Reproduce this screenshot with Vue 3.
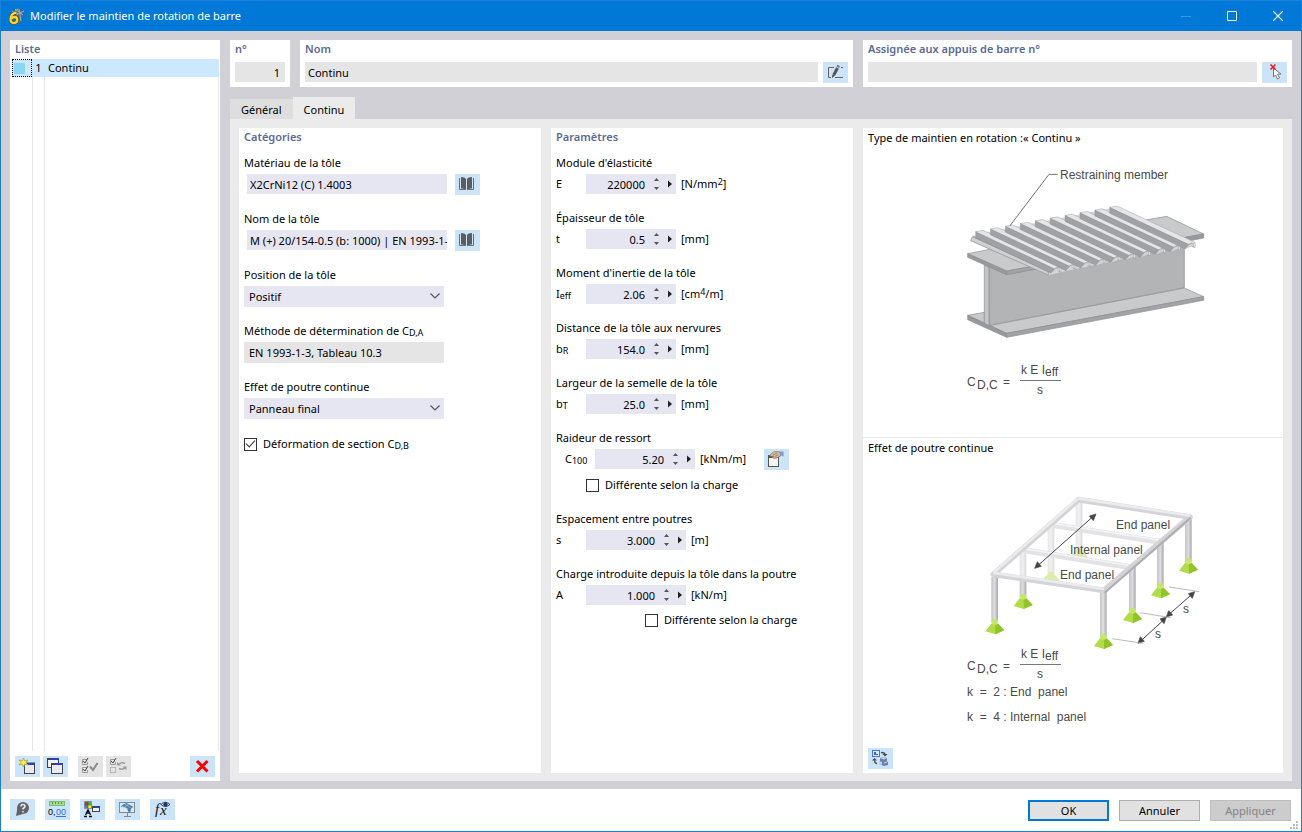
<script setup>
import { ref } from 'vue'

const params = ref([
  { id: 'e', label: 'Module d\'élasticité', sym: 'E', value: '220000', unit: '[N/mm', sup: '2', end: ']' },
  { id: 't', label: 'Épaisseur de tôle', sym: 't', value: '0.5', unit: '[mm]' },
  { id: 'ieff', label: 'Moment d\'inertie de la tôle', sym: 'I', sub: 'eff', value: '2.06', unit: '[cm', sup: '4', end: '/m]' },
  { id: 'br', label: 'Distance de la tôle aux nervures', sym: 'b', sub: 'R', value: '154.0', unit: '[mm]' },
  { id: 'bt', label: 'Largeur de la semelle de la tôle', sym: 'b', sub: 'T', value: '25.0', unit: '[mm]' },
  { id: 'c100', label: 'Raideur de ressort', sym: 'C', sub: '100', value: '5.20', unit: '[kNm/m]', wide: true, indent: true, tool: true, check: 'near' },
  { id: 's', label: 'Espacement entre poutres', sym: 's', value: '3.000', unit: '[m]', wide: true },
  { id: 'a', label: 'Charge introduite depuis la tôle dans la poutre', sym: 'A', value: '1.000', unit: '[kN/m]', wide: true, check: 'far' },
])
const name = ref('Continu')
const material = ref('X2CrNi12 (C) 1.4003')
const sheet = ref('M (+) 20/154-0.5 (b: 1000) | EN 1993-1-3')
const deform = ref(true)

const ribs = Array.from({ length: 10 }, (_, i) => ({ x: 107 + i * 44.7, y: 215 - i * 8.1 }))
const backPosts = [
  { x: 417, y: 62, h: 148 },
  { x: 333, y: 138, h: 142 },
]
const posts = [
  { x: 249, y: 214, h: 134 },
  { x: 745, y: 112, h: 130 },
  { x: 661, y: 182, h: 134 },
  { x: 577, y: 258, h: 132 },
  { x: 164, y: 288, h: 136 },
  { x: 490, y: 334, h: 134 },
]
</script>

<template>
  <div class="window">
    <header class="titlebar">
      <svg class="app-icon" width="18" height="18" viewBox="0 0 18 18">
        <path d="M3 6 L10 1 L16 4 L16 6 L12 17 L9 15 L8 6Z" fill="#4d6b86" />
        <path d="M4 4 L10 7 M7 2 L15 8 M3 7 L10 2 M8 8 L16 4 M11 2 L13 14" stroke="#9fb3c4" stroke-width="1" fill="none" />
        <path d="M8.500 5.500 C4.500 6 2.500 9 2.500 12 C2.500 15 4 16 6 16 C8.200 16 9.200 14.500 9.200 12.800 C9.200 11 8 10 6.500 10 C5.300 10 4.200 10.600 3.500 12" fill="none" stroke="#5a4a10" stroke-width="3.400" />
        <path d="M8.500 5.500 C4.500 6 2.500 9 2.500 12 C2.500 15 4 16 6 16 C8.200 16 9.200 14.500 9.200 12.800 C9.200 11 8 10 6.500 10 C5.300 10 4.200 10.600 3.500 12" fill="none" stroke="#ffd42e" stroke-width="2.300" />
      </svg>
      <h1>Modifier le maintien de rotation de barre</h1>
      <div class="win-controls">
        <button type="button" aria-label="Réduire" disabled><svg width="10" height="10"><path d="M0 5.500H10" stroke="#3f9ae4" /></svg></button>
        <button type="button" aria-label="Agrandir"><svg width="10" height="10"><path d="M.5 .5H9.500V9.500H.5Z" fill="none" stroke="#fff" /></svg></button>
        <button type="button" aria-label="Fermer"><svg width="10" height="10"><path d="M0 0L10 10M10 0L0 10" stroke="#fff" stroke-width="1.200" /></svg></button>
      </div>
    </header>

    <main class="body">
      <aside class="card list">
        <h2>Liste</h2>
        <div class="list-body">
          <table>
            <tbody>
              <tr>
                <td class="swatch"><span></span></td>
                <td class="num">1</td>
                <td class="name">Continu</td>
              </tr>
            </tbody>
          </table>
        </div>
        <div class="list-tools">
          <button class="tool" type="button" aria-label="Nouveau">
            <svg width="25" height="21" viewBox="0 0 25 21">
              <rect x="9.500" y="7.500" width="10" height="10" fill="#e9eaed" stroke="#444" />
              <path d="M9 7.500h11" stroke="#444" stroke-width="2" /><path d="M13 8h6" stroke="#2440d8" stroke-width="2" />
              <path d="M8.500 2l1.200 2.800 3.300-.8-2 2.500 2 2.500-3.300-.8L8.500 11 7.300 8.200 4 9l2-2.500L4 4l3.300 .8z" fill="#fff04a" stroke="#a5a63c" stroke-width=".8" />
            </svg>
          </button>
          <button class="tool" type="button" aria-label="Copier">
            <svg width="25" height="21" viewBox="0 0 25 21">
              <rect x="4.500" y="2.500" width="11" height="9" fill="#f1f1f4" stroke="#444" />
              <path d="M4 3h12" stroke="#444" stroke-width="2" /><path d="M9 3h6" stroke="#2440d8" stroke-width="2" />
              <rect x="8.500" y="7.500" width="11" height="10" fill="#e9eaed" stroke="#444" />
              <path d="M8 8h12" stroke="#444" stroke-width="2" /><path d="M13 8h6" stroke="#2440d8" stroke-width="2" />
            </svg>
          </button>
          <button class="tool off gap" type="button" aria-label="Tout cocher" disabled>
            <svg width="25" height="21" viewBox="0 0 25 21" fill="none">
              <path d="M9 3.500H4.500V8.500H9.500V6M9 11.500H4.500V16.500H9.500V14" stroke="#999" />
              <path d="M5 5l2 2 3-5M5 13l2 2 3-5" stroke="#444" />
              <path d="M12 10.500l3 3.500 4.500-7" stroke="#8b8b8b" stroke-width="2" />
            </svg>
          </button>
          <button class="tool off" type="button" aria-label="Inverser" disabled>
            <svg width="25" height="21" viewBox="0 0 25 21" fill="none">
              <path d="M9 3.500H4.500V8.500H9.500V6" stroke="#999" /><path d="M5 5l2 2 3-5" stroke="#444" />
              <rect x="4.500" y="11.500" width="5" height="5" stroke="#b5b5b5" />
              <path d="M13 8.500c1-2 4-2 6-1M19 11.500c-1 2-4 2-6 1" stroke="#999" stroke-width="1.500" />
              <path d="M11 6v3.500h4zM20.500 14v-3.500h-4z" fill="#999" />
            </svg>
          </button>
          <button class="tool last" type="button" aria-label="Supprimer">
            <svg width="25" height="21" viewBox="0 0 25 21"><path d="M7 5l10.500 10.500M17.500 5L7 15.500" stroke="#f00" stroke-width="3" /></svg>
          </button>
        </div>
      </aside>

      <section class="content">
        <div class="heads">
          <div class="card head">
            <label for="no">n°</label>
            <input id="no" class="ro right" value="1" readonly />
          </div>
          <div class="card head">
            <label for="nom">Nom</label>
            <div class="line">
              <input id="nom" v-model="name" class="ro" />
              <button class="tool" type="button" aria-label="Modifier le nom">
                <svg width="25" height="21" viewBox="0 0 25 21" fill="none">
                  <path d="M11 5.500H5.500V15.500H8M12 15.500h8M18 5.500h2" stroke="#666" />
                  <path d="M10.800 13L14.500 6" stroke="#555" stroke-width="3" /><path d="M14.800 5.200L15.700 3.500" stroke="#777" stroke-width="3" /><path d="M9 16l.4-3.500 2.400 1.300z" fill="#444" />
                </svg>
              </button>
            </div>
          </div>
          <div class="card head">
            <label for="assign">Assignée aux appuis de barre n°</label>
            <div class="line">
              <input id="assign" class="ro" readonly />
              <button class="tool" type="button" aria-label="Sélectionner">
                <svg width="25" height="21" viewBox="0 0 25 21">
                  <path d="M11.500 6v9l2-2 2 4 2-1-2-4h3.500z" fill="#fff" stroke="#777" />
                  <path d="M8.500 2.500l5 5M13.500 2.500l-5 5" stroke="#e81818" stroke-width="1.500" />
                </svg>
              </button>
            </div>
          </div>
        </div>

        <nav class="tabs" role="tablist">
          <button type="button" role="tab" aria-selected="false">Général</button>
          <button type="button" role="tab" aria-selected="true" class="active">Continu</button>
        </nav>

        <div class="page">
          <section class="card panel">
            <h2>Catégories</h2>
            <div class="group">
              <label for="mat">Matériau de la tôle</label>
              <div class="pick">
                <input id="mat" v-model="material" />
                <button class="tool" type="button" aria-label="Bibliothèque de matériaux">
                  <svg width="25" height="21" viewBox="0 0 25 21">
                    <path d="M6 3q4 0 5 2v11q-2-2-5-1.500zM17 3q-4 0-5 2v11q2-2 5-1.500z" fill="#5d5d5d" />
                    <path d="M4.500 4v11.500h6M18.500 4v11.500h-6" fill="none" stroke="#6d6d6d" />
                  </svg>
                </button>
              </div>
            </div>
            <div class="group">
              <label for="sheet">Nom de la tôle</label>
              <div class="pick">
                <input id="sheet" v-model="sheet" />
                <button class="tool" type="button" aria-label="Bibliothèque de tôles">
                  <svg width="25" height="21" viewBox="0 0 25 21">
                    <path d="M6 3q4 0 5 2v11q-2-2-5-1.500zM17 3q-4 0-5 2v11q2-2 5-1.500z" fill="#5d5d5d" />
                    <path d="M4.500 4v11.500h6M18.500 4v11.500h-6" fill="none" stroke="#6d6d6d" />
                  </svg>
                </button>
              </div>
            </div>
            <div class="group">
              <label for="pos">Position de la tôle</label>
              <div class="select">
                <select id="pos"><option>Positif</option></select>
                <svg width="10" height="6"><path d="M.5 .5L5 5L9.500 .5" fill="none" stroke="#555" stroke-width="1.200" /></svg>
              </div>
            </div>
            <div class="group">
              <label for="meth">Méthode de détermination de C<sub>D,A</sub></label>
              <input id="meth" class="ro method" value="EN 1993-1-3, Tableau 10.3" readonly />
            </div>
            <div class="group">
              <label for="eff">Effet de poutre continue</label>
              <div class="select">
                <select id="eff"><option>Panneau final</option></select>
                <svg width="10" height="6"><path d="M.5 .5L5 5L9.500 .5" fill="none" stroke="#555" stroke-width="1.200" /></svg>
              </div>
            </div>
            <label class="check"><input v-model="deform" type="checkbox" /><span>Déformation de section C<sub>D,B</sub></span></label>
          </section>

          <section class="card panel">
            <h2>Paramètres</h2>
            <div v-for="p in params" :key="p.id" class="group">
              <label :for="p.id">{{ p.label }}</label>
              <div class="param" :class="{ indent: p.indent }">
                <span class="sym">{{ p.sym }}<sub v-if="p.sub">{{ p.sub }}</sub></span>
                <div class="spin" :class="{ wide: p.wide }">
                  <input :id="p.id" v-model="p.value" />
                  <div class="arrows">
                    <button type="button" aria-label="Augmenter"><svg width="5" height="3"><path d="M0 3L2.500 0L5 3Z" fill="#555" /></svg></button>
                    <button type="button" aria-label="Diminuer"><svg width="5" height="3"><path d="M0 0L2.500 3L5 0Z" fill="#555" /></svg></button>
                  </div>
                  <button class="more" type="button" aria-label="Options"><svg width="4" height="8"><path d="M0 0.500L4 4L0 7.500Z" fill="#222" /></svg></button>
                </div>
                <span class="unit">{{ p.unit }}<sup v-if="p.sup">{{ p.sup }}</sup>{{ p.end }}</span>
                <button v-if="p.tool" class="tool edit" type="button" aria-label="Modifier la raideur">
                  <svg width="25" height="21" viewBox="0 0 25 21">
                    <rect x="4.500" y="6.500" width="10" height="11" fill="#f4f4f4" stroke="#555" /><path d="M4 8h11" stroke="#555" stroke-width="2" />
                    <path d="M5.500 6.500l4-3.500 5-.5 3 1.500-1 3-3 1.500-3 1-2-1 1-1.500-2 .5z" fill="#d6b79b" stroke="#8b7563" stroke-width=".8" />
                    <path d="M9 6l4-1.500M11 7.500l3-1.500" stroke="#8b7563" stroke-width=".7" />
                    <path d="M15 2.500h4.500v5l-3-1.500z" fill="#7d9ad6" />
                  </svg>
                </button>
              </div>
              <label v-if="p.check" class="check" :class="p.check"><input type="checkbox" /><span>Différente selon la charge</span></label>
            </div>
          </section>

          <section class="card preview">
            <figure class="first">
              <figcaption>Type de maintien en rotation :« Continu »</figcaption>
              <svg class="art" width="420" height="270" viewBox="863 150 420 270">
                <g transform="translate(940 160) scale(.33333)" stroke="#8b8c90" stroke-width="2" stroke-linejoin="round">
                  <path d="M83 466L133 457V490L148 497L733 384L791 410L200 520Z" fill="#c9cacc" />
                  <path d="M83 466L200 520V532L83 479Z" fill="#98999d" />
                  <path d="M200 520L791 410V421L200 532Z" fill="#a2a3a7" />
                  <path d="M147 320L200 343L733 240V383L147 496Z" fill="#b3b4b6" />
                  <path d="M133 314L147 321V497L133 490Z" fill="#c4c5c7" />
                  <path d="M83 281L150 268L290 318L200 333Z" fill="#c9cacc" />
                  <path d="M83 281L200 333V344L83 292Z" fill="#98999d" />
                  <path d="M200 333L290 316V327L200 344Z" fill="#a2a3a7" />
                  <path d="M600 183L680 169L791 222L725 234Z" fill="#c9cacc" />
                  <path d="M720 235L791 222V234L735 245Z" fill="#98999d" />
                  <path d="M92 242L105 224L530 141L765 254L735 258L360 337L325 346Z" fill="#d9d9dc" stroke="none" />
                  <path d="M92 242L97 230L325 334V345Z" fill="#d0d0d3" />
                  <path d="M98 228L325 334" fill="none" />
                  <g v-for="(r, i) in ribs" :key="i" :transform="`translate(${r.x} ${r.y})`" stroke-width="1.200">
                    <path d="M0 0V18L226 125L238 111Z" fill="#a0a1a5" />
                    <path d="M0 0L22 -4L256 105V121L250 119L246 106L236 111Z" fill="#e6e6e8" />
                    <path d="M226 125L238 111L250 107L252 119L246 118" fill="#d3d3d6" />
                  </g>
                  <path d="M210 197L327 43H353" fill="none" stroke="#555" stroke-width="2.500" />
                </g>
                <g class="art-text">
                  <text x="1060" y="179">Restraining member</text>
                  <text x="967" y="386">C</text><text x="977" y="389">D,C</text><text x="1003" y="386">=</text>
                  <text x="1021" y="374">k E I</text><text x="1045" y="376">eff</text>
                  <text x="1037" y="394">s</text>
                </g>
                <path d="M1020 380.500H1061" stroke="#777" />
              </svg>
            </figure>
            <figure>
              <figcaption>Effet de poutre continue</figcaption>
              <svg class="art" width="420" height="270" viewBox="863 459 420 270">
                <defs>
                  <linearGradient id="post"><stop offset="0" stop-color="#c4c4c8" /><stop offset=".5" stop-color="#dedee1" /><stop offset="1" stop-color="#a8a8ad" /></linearGradient>
                </defs>
                <g transform="translate(940 480) scale(.33333)">
                  <g v-for="(b, i) in backPosts" :key="'b' + i" :transform="`translate(${b.x} ${b.y})`" opacity=".9">
                    <rect x="-10" y="0" width="20" :height="b.h" fill="url(#post)" />
                    <path :transform="`translate(0 ${b.h})`" d="M-8 -8H8L10 0L27 19L5 27L-27 18L-10 0Z" fill="#a5d334" />
                  </g>
                  <g v-for="(b, i) in posts" :key="i" :transform="`translate(${b.x} ${b.y})`">
                    <rect x="-10" y="0" width="20" :height="b.h" fill="url(#post)" />
                    <g :transform="`translate(0 ${b.h})`">
                      <path d="M-10 4L-28 27L2 36L29 24L10 4Z" fill="#b0dc48" />
                      <path d="M2 4L2 36L29 24L10 4Z" fill="#90c428" />
                      <ellipse cy="-1" rx="10" ry="9" fill="#c5e66a" />
                    </g>
                  </g>
                  <path d="M416 54L750 106L492 330L160 282Z" fill="#fff" opacity=".55" />
                  <path d="M340 132L668 184M252 208L582 260" fill="none" stroke="#e3e3e6" stroke-width="18" />
                  <path d="M338 127L668 179M250 203L580 255" fill="none" stroke="#f3f3f5" stroke-width="5" />
                  <path d="M416 56L750 108L492 328L160 280Z" fill="none" stroke="#d4d4d8" stroke-width="17" stroke-linejoin="round" />
                  <path d="M414 52L750 104M160 276L412 54M162 276L492 324" fill="none" stroke="#ececef" stroke-width="8" />
                  <path d="M752 110L494 335" stroke="#adadb2" stroke-width="6" />
                  <path d="M290 257L462 104M600 482L674 414M684 403L758 338" stroke="#444" stroke-width="3" />
                  <path d="M284 262L292 242L304 256ZM468 99L460 119L448 105ZM594 487L601 467L613 481ZM679 408L672 428L660 414ZM679 408L686 389L698 402ZM764 332L757 352L745 338Z" fill="#444" stroke="#444" stroke-width="2" />
                  <path d="M517 473L610 487M601 395L692 410M687 318L778 332" stroke="#999" stroke-width="2" />
                </g>
                <g class="art-text">
                  <text x="1116" y="528">End panel</text><text x="1070" y="553">Internal panel</text><text x="1060" y="578">End panel</text>
                  <text x="1183" y="612">s</text><text x="1155" y="637">s</text>
                  <text x="967" y="669">C</text><text x="977" y="672">D,C</text><text x="1003" y="669">=</text>
                  <text x="1021" y="657">k E I</text><text x="1045" y="659">eff</text>
                  <text x="1037" y="677">s</text>
                  <text x="967" y="695">{{ 'k  =  2 : End  panel' }}</text>
                  <text x="967" y="720">{{ 'k  =  4 : Internal  panel' }}</text>
                </g>
                <path d="M1020 663.500H1061" stroke="#777" />
              </svg>
              <button class="tool switch" type="button" aria-label="Changer la vue">
                <svg width="25" height="21" viewBox="0 0 25 21">
                  <rect x="4.500" y="2.500" width="7" height="6" fill="#dfe9ff" stroke="#4473df" /><path d="M6 4v3h4V6H8V4z" fill="#3665d8" />
                  <path d="M13 4.500q4 0 4 2M9 15.500q-2.500 0-2.500-3" fill="none" stroke="#444" stroke-width="1.300" /><path d="M14.500 6h5L17 8.500zM4 12.500h5L6.500 10z" fill="#444" />
                  <path d="M12 10l3-1 4 1v3l1 1v3l-4 1-5-2v-3h1z" fill="#6883ac" /><path d="M12 10l3-1 4 1-3 1.500zM11 13l3 1v3l-3-1zM16 14.500l4-1.500v1l-4 1.500z" fill="#c2d3e8" />
                </svg>
              </button>
            </figure>
          </section>
        </div>
      </section>
    </main>

    <footer class="footer">
      <div class="foot-tools">
        <button class="tool" type="button" aria-label="Aide">
          <svg width="25" height="21" viewBox="0 0 25 21"><circle cx="13" cy="9" r="6" fill="#636363" /><path d="M7.500 9L6 17l7-2z" fill="#636363" /><path d="M11 7.500q0-2 2-2t2 2q0 1-2 2v1M13 12v1.500" stroke="#e5eef7" stroke-width="1.500" fill="none" /></svg>
        </button>
        <button class="tool" type="button" aria-label="Unités">
          <svg width="25" height="21" viewBox="0 0 25 21"><rect x="4.500" y="2.500" width="15" height="4" fill="#a5dd8e" stroke="#82bd6b" /><path d="M7.500 3v2M10.500 3v2M13.500 3v2M16.500 3v2" stroke="#5a9446" /><text x="3" y="16" class="tiny">0,</text><text x="11" y="16" class="tiny blue">00</text><path d="M11 17.500h10" stroke="#3d72dd" /></svg>
        </button>
        <button class="tool" type="button" aria-label="Affichage">
          <svg width="25" height="21" viewBox="0 0 25 21"><path d="M5 3h3v3H5z" fill="#e21" /><path d="M8 3h3v3H8z" fill="#3b3" /><path d="M5 6h3v3H5z" fill="#28e" /><path d="M8 6h3v3H8z" fill="#fe1" /><path d="M4.500 2.500h7v7h-7zM4.500 6h7M8 2.500v7" fill="none" stroke="#555" stroke-width=".6" /><path d="M8 10.500L5.500 16M8 10.500l2.500 5.500M6.500 14h3M4 17.500h3m2 0h3" stroke="#111" stroke-width="1.300" /><rect x="12.500" y="7.500" width="7" height="5" fill="#eee" stroke="#444" /><path d="M12 8h8" stroke="#444" stroke-width="2" /><path d="M15 8h4" stroke="#2440d8" stroke-width="2" /></svg>
        </button>
        <button class="tool" type="button" aria-label="Rendu">
          <svg width="25" height="21" viewBox="0 0 25 21"><rect x="4.500" y="3.500" width="15" height="10" fill="#d8ebf8" stroke="#888" /><path d="M5.500 8q2-3 6-4l7 4-2 1q-1 1-1 3.500l-1.500 1.500-2-4.500q-3-2.500-6.500-1.500z" fill="#4c7ca4" /><path d="M7 7l6 3M10 5l6 4M8 9l6-4" stroke="#a5c9e3" stroke-width=".7" /><path d="M9 17.500h7M12.500 14v3" stroke="#888" /></svg>
        </button>
        <button class="tool" type="button" aria-label="Formule">
          <svg width="25" height="21" viewBox="0 0 25 21"><text x="5" y="15" class="fx">f</text><text x="10" y="16" class="fx">x</text><path d="M11 5.500q4-4.500 9 0q-4.500 4-9 0z" fill="#fff" stroke="#34406b" /><circle cx="15.500" cy="5.500" r="2.200" fill="#27336b" /></svg>
        </button>
      </div>
      <div class="actions">
        <button type="button" class="ok">OK</button>
        <button type="button">Annuler</button>
        <button type="button" disabled>Appliquer</button>
      </div>
      <svg class="grip" width="9" height="9"><path d="M6 0h2v2H6zM3 3h2v2H3zM6 3h2v2H6zM0 6h2v2H0zM3 6h2v2H3zM6 6h2v2H6z" fill="#bbb" /></svg>
    </footer>
  </div>
</template>

<style>
body { margin: 0; background: #fff; }
</style>

<style scoped>
* { box-sizing: border-box; }
.window {
  display: flex;
  flex-direction: column;
  min-height: 100vh;
  border: 1px solid #1a80d9;
  background: #fff;
  color: #000;
  font: 11px/16px "Noto Sans", "Open Sans", sans-serif;
}
button, input, select { font: inherit; color: inherit; border: 0; border-radius: 0; padding: 0; margin: 0; background: none; min-width: 0; }
svg { display: block; }
h1, h2, figure { margin: 0; font: inherit; }
sub, sup { font-size: 9px; line-height: 0; vertical-align: baseline; position: relative; }
sub { top: 1px; }
sup { top: -3px; }

.titlebar { display: flex; align-items: center; height: 30px; padding-left: 7px; background: #0078d7; color: #fff; }
.titlebar h1 { margin-left: 4px; flex: 1; }
.win-controls { display: flex; }
.win-controls button { display: grid; place-items: center; width: 46px; height: 30px; }

.body { flex: 1; display: flex; gap: 10px; padding: 9px 9px 8px; background: #d1d0d6; }
.card { background: #fff; }
.card > h2, .head > label { display: block; color: #5b6b93; font-weight: 600; }

.list { display: flex; flex-direction: column; width: 210px; flex: none; }
.list > h2 { padding: 1px 5px 2px; }
.list-body {
  flex: 1;
  margin: 0 1px 0 2px;
  background:
    linear-gradient(#e6e6e6, #e6e6e6) 20px 0 / 1px 100% no-repeat,
    linear-gradient(#e6e6e6, #e6e6e6) 32px 0 / 1px 100% no-repeat,
    linear-gradient(#e6e6e6, #e6e6e6) 100% 0 / 1px 100% no-repeat;
}
.list table { width: 100%; border-spacing: 0; }
.list tr { background: #cce8ff; }
.list td { height: 18px; padding: 0; line-height: 16px; }
.list .swatch { width: 20px; border: 1px dotted #000; }
.swatch span { display: block; width: 11px; height: 11px; margin-left: 1px; background: #8ad6f4; }
.list .num { width: 13px; text-align: center; }
.list .name { padding-left: 3px; }
.list-tools { display: flex; gap: 3px; padding: 5px 5px 4px; }
.list-tools .gap { margin-left: 7px; }
.list-tools .last { margin-left: auto; }

.tool { flex: none; width: 25px; height: 21px; background: #cce4f7; }
.tool.off { background: #e4e4e4; }

.content { flex: 1; min-width: 0; display: flex; flex-direction: column; }
.heads { display: grid; grid-template-columns: 60px minmax(0, 553fr) minmax(0, 429fr); gap: 10px; }
.head { padding: 1px 5px 4px; }
.head > label { margin-bottom: 5px; }
.line { display: flex; gap: 5px; }
.ro { width: 100%; height: 20px; padding: 1px 5px 0; background: #e5e5e5; }
.line .ro { flex: 1; padding: 1px 3px 0; }
.right { text-align: right; }

.tabs { display: flex; align-items: flex-end; margin-top: 10px; }
.tabs button { height: 20px; padding: 2px 11px 0; background: #dedede; }
.tabs .active { height: 22px; padding-top: 4px; background: #ebebeb; }

.page { flex: 1; display: grid; grid-template-columns: minmax(0, 302fr) minmax(0, 302fr) minmax(0, 420fr); gap: 10px; padding: 9px 9px 8px; background: #ebebeb; }
.panel { padding: 1px 5px; }
.panel > h2 { margin-bottom: 10px; }
.group { margin-bottom: 16px; }
.group > label:first-child { display: block; margin-bottom: 3px; }
.pick { display: flex; justify-content: space-between; width: 236px; padding-left: 3px; }
.pick input { width: 200px; height: 20px; padding: 1px 0 0 3px; background: #e6e6f2; }
.select { position: relative; width: 200px; }
.select select { display: block; width: 100%; height: 21px; padding: 0 5px; background: #e6e6f2; appearance: none; }
.select svg { position: absolute; right: 4px; top: 7px; pointer-events: none; }
.ro.method { display: block; width: 200px; height: 21px; padding-top: 0; }

.check { display: flex; align-items: center; gap: 6px; }
.check input { appearance: none; width: 13px; height: 13px; border: 1px solid #333; background: #fff; display: grid; place-items: center; }
.check input:checked::after { content: ""; width: 8px; height: 4px; margin-bottom: 3px; border: solid #333; border-width: 0 0 1px 1px; transform: rotate(-47deg); }
.group + .check { margin-top: 17px; }
.check.near { margin: 8px 0 18px 30px; }
.check.far { margin: 7px 0 0 89px; }

.param { display: flex; height: 20px; }
.param.indent { padding-left: 9px; }
.sym { width: 30px; line-height: 20px; }
.unit { margin-left: 5px; line-height: 20px; }
.spin { display: flex; width: 90px; background: #e6e6f2; }
.spin.wide { width: 100px; }
.spin input { flex: 1; padding-top: 1px; text-align: right; }
.arrows { display: flex; flex-direction: column; justify-content: space-between; width: 23px; padding: 4px 0; align-items: center; }
.arrows button { height: 3px; }
.more { display: flex; align-items: center; width: 8px; }
.indent .unit { width: 64px; }

.preview { display: flex; flex-direction: column; }
figure { position: relative; padding: 2px 5px 4px; flex: 336 1 0; display: flex; flex-direction: column; }
.first { flex: 309 1 0; border-bottom: 1px solid #ebebeb; }
.art { align-self: center; flex: none; margin: 4px -5px 0; max-width: calc(100% + 10px); }
.art-text { font: 12px "Liberation Sans", Arial, sans-serif; fill: #4a4a4a; }
.art-text text { white-space: pre; }
.switch { margin-top: auto; }

.footer { position: relative; display: flex; justify-content: space-between; align-items: flex-start; padding: 10px 10px 10px 9px; }
.foot-tools { display: flex; gap: 10px; }
.actions { display: flex; gap: 10px; padding-top: 1px; }
.actions button { width: 81px; height: 21px; border: 1px solid #adadad; background: #e1e1e1; }
.actions .ok { border: 2px solid #0078d7; }
.actions button:disabled { border-color: #bfbfbf; background: #ccc; color: #838383; }
.grip { position: absolute; right: 2px; bottom: 1px; }
.tiny { font: 9px "Liberation Sans", Arial, sans-serif; }
.blue { fill: #3d72dd; }
.fx { font: italic 15px "Liberation Serif", serif; fill: #111; }
</style>
